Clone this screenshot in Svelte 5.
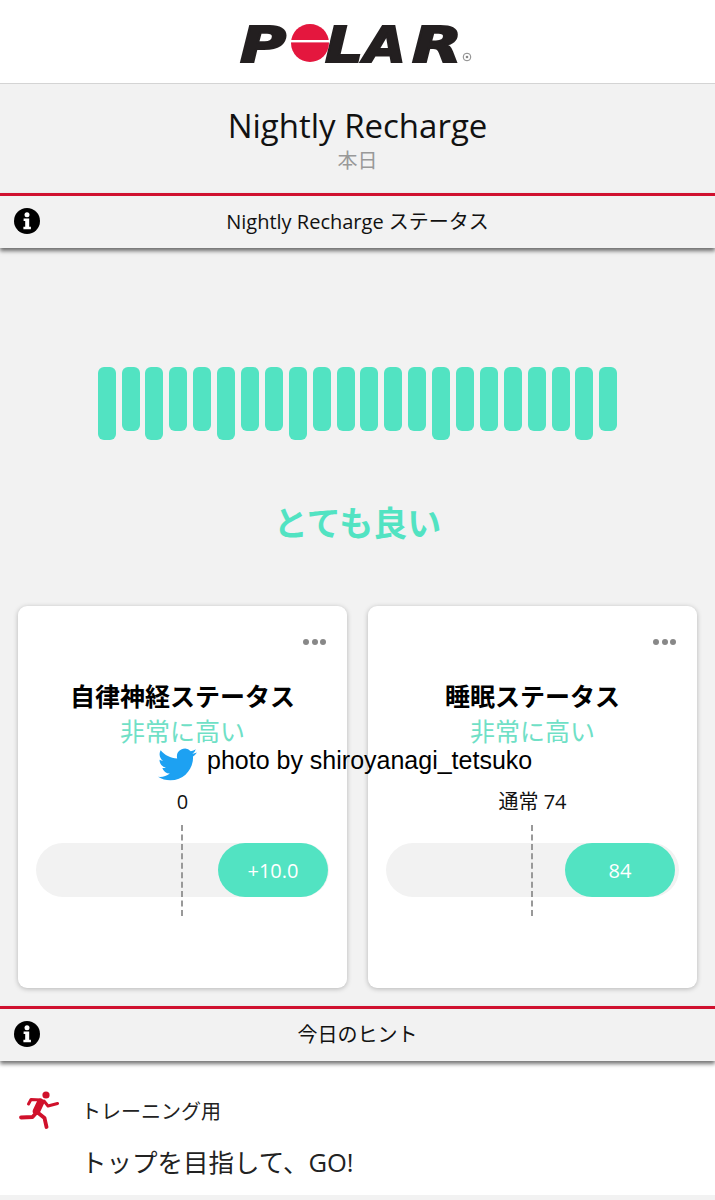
<script>
	// long bars sit at these positions in the 22-bar recharge meter
	const longBars = [0, 2, 5, 8, 14, 20];
	const bars = Array.from({ length: 22 }, (_, i) => longBars.includes(i));

	const cards = [
		{ title: '自律神経ステータス', level: '非常に高い', label: '0', value: '+10.0', inset: false },
		{ title: '睡眠ステータス', level: '非常に高い', label: '通常 74', value: '84', inset: true }
	];
</script>

{#snippet infoIcon()}
	<svg class="info" viewBox="0 0 26 26" aria-hidden="true">
		<circle cx="13" cy="13" r="13" fill="#000" />
		<circle cx="13" cy="6.8" r="2.5" fill="#fff" />
		<path d="M9.6 10.6h5.6v8.2h1.7v2.4H9.4v-2.4h1.8v-5.8H9.6z" fill="#fff" />
	</svg>
{/snippet}

<div class="page">
	<header class="brand">
		<svg class="logo" viewBox="0 0 235 42" role="img" aria-label="POLAR">
			<g class="logo-letters">
				<text transform="translate(0 40) scale(1.26 1)">P</text>
				<text transform="translate(85 40) scale(1.2 1)">L</text>
				<text transform="translate(124 40) scale(1.08 1)">A</text>
				<text transform="translate(172 40) scale(1.3 1)">R</text>
			</g>
			<circle cx="70" cy="21" r="19" fill="#e4173e" />
			<rect x="50" y="18" width="40" height="2.4" fill="#fff" />
			<circle cx="227" cy="35" r="3.8" fill="none" stroke="#888" stroke-width="1" />
			<circle cx="227" cy="35" r="1.3" fill="#888" />
		</svg>
	</header>

	<section class="heading">
		<h1>Nightly Recharge</h1>
		<p>本日</p>
	</section>

	<div class="section-bar">
		{@render infoIcon()}
		<span>Nightly Recharge ステータス</span>
	</div>

	<main class="content">
		<div class="meter">
			{#each bars as long}
				<div class="bar" class:long></div>
			{/each}
		</div>

		<div class="verdict">とても良い</div>

		<div class="cards">
			{#each cards as card}
				<article class="card">
					<div class="dots"><i></i><i></i><i></i></div>
					<h2>{card.title}</h2>
					<div class="level">{card.level}</div>
					<div class="label">{card.label}</div>
					<div class="track" class:inset={card.inset}>
						<div class="tick"></div>
						<div class="pill">{card.value}</div>
					</div>
				</article>
			{/each}
		</div>

		<div class="watermark">
			<svg viewBox="0 0 24 24" aria-hidden="true">
				<path
					fill="#1da1f2"
					d="M23.95 4.57a10 10 0 0 1-2.82.77 4.96 4.96 0 0 0 2.16-2.72c-.95.55-2 .96-3.12 1.19a4.92 4.92 0 0 0-8.38 4.48C7.69 8.1 4.07 6.13 1.64 3.16a4.82 4.82 0 0 0-.67 2.48c0 1.71.87 3.21 2.19 4.1a4.9 4.9 0 0 1-2.23-.62v.06a4.92 4.92 0 0 0 3.95 4.83 5 5 0 0 1-2.21.08 4.94 4.94 0 0 0 4.6 3.42A9.87 9.87 0 0 1 0 19.54a14 14 0 0 0 7.56 2.21c9.05 0 14-7.5 14-13.98 0-.21 0-.42-.02-.63a9.94 9.94 0 0 0 2.41-2.57z"
				/>
			</svg>
			<span>photo by shiroyanagi_tetsuko</span>
		</div>
	</main>

	<div class="section-bar">
		{@render infoIcon()}
		<span>今日のヒント</span>
	</div>

	<section class="tip">
		<div class="tip-head">
			<svg class="runner" viewBox="0 0 40 38" aria-hidden="true">
				<circle cx="27" cy="4" r="3.6" fill="#d0112b" />
				<g fill="none" stroke="#d0112b" stroke-linecap="round" stroke-linejoin="round">
					<path stroke-width="7.5" d="M21.5 11.5 17.5 20" />
					<path stroke-width="3" d="M22 9 12 8.5 9.5 13" />
					<path stroke-width="3" d="M25 10 29 15 38.5 12.5" />
					<path stroke-width="3.8" d="M18 21 13.5 26 2 26.5" />
					<path stroke-width="3.8" d="M18 21 25.5 27 27.5 36" />
				</g>
			</svg>
			<span>トレーニング用</span>
		</div>
		<p>トップを目指して、GO!</p>
	</section>
</div>

<style>
	:global(body) {
		margin: 0;
		background: #f2f2f2;
	}

	.page {
		width: 715px;
		height: 1200px;
		overflow: hidden;
		background: #f2f2f2;
		color: #111;
		font-family: 'Open Sans', 'Noto Sans CJK JP', sans-serif;
	}

	.brand {
		height: 83px;
		background: #fff;
		border-bottom: 1px solid #d4d4d4;
		display: flex;
		justify-content: center;
		align-items: center;
	}

	.logo {
		width: 235px;
		height: 42px;
		margin-top: 2px;
		overflow: visible;
	}

	.logo-letters text {
		font-family: 'DejaVu Sans', sans-serif;
		font-weight: 700;
		font-style: oblique;
		font-size: 50px;
		fill: #231f20;
		stroke: #231f20;
		stroke-width: 2;
	}

	.heading {
		height: 109px;
		text-align: center;
		box-sizing: border-box;
		padding-top: 20px;
	}

	h1 {
		margin: 0;
		font-size: 33px;
		line-height: 44px;
		font-weight: 400;
	}

	.heading p {
		margin: 0;
		font-size: 20px;
		line-height: 26px;
		color: #999;
	}

	.section-bar {
		position: relative;
		z-index: 1;
		height: 52px;
		border-top: 3px solid #d0112f;
		background: #f2f2f2;
		box-shadow: 0 3px 4px rgba(0, 0, 0, 0.55);
		display: flex;
		align-items: center;
		justify-content: center;
		font-size: 20px;
	}

	.section-bar span {
		margin-top: -3px;
	}

	.info {
		position: absolute;
		left: 14px;
		top: 12px;
		width: 26px;
		height: 26px;
	}

	.content {
		position: relative;
		height: 758px;
		box-sizing: border-box;
		padding-top: 119px;
	}

	.meter {
		display: flex;
		justify-content: center;
		align-items: flex-start;
		gap: 5.9px;
		height: 73px;
	}

	.bar {
		width: 18px;
		height: 64px;
		border-radius: 6px;
		background: #52e3c2;
	}

	.bar.long {
		height: 73px;
	}

	.verdict {
		margin-top: 60px;
		text-align: center;
		font-size: 34px;
		line-height: 46px;
		font-weight: 700;
		color: #52e3c2;
	}

	.cards {
		display: flex;
		gap: 21px;
		padding: 0 18px;
		margin-top: 60px;
	}

	.card {
		flex: 1;
		height: 382px;
		box-sizing: border-box;
		background: #fff;
		border-radius: 9px;
		box-shadow: 0 1px 5px rgba(0, 0, 0, 0.25);
		padding: 33px 18px 0;
		text-align: center;
	}

	.dots {
		display: flex;
		justify-content: flex-end;
		gap: 2.5px;
		height: 6px;
		padding-right: 3px;
	}

	.dots i {
		width: 6px;
		height: 6px;
		border-radius: 50%;
		background: #888;
	}

	h2 {
		margin: 31px 0 0;
		font-size: 25px;
		line-height: 40px;
		font-weight: 700;
		color: #000;
	}

	.level {
		font-size: 25px;
		line-height: 30px;
		color: #6fe0c6;
	}

	.label {
		margin-top: 43px;
		font-size: 20px;
		line-height: 26px;
	}

	.track {
		position: relative;
		margin-top: 28px;
		height: 54px;
		border-radius: 27px;
		background: #f2f2f2;
		display: flex;
		justify-content: flex-end;
		padding-right: 1px;
	}

	.track.inset {
		padding-right: 4px;
	}

	.tick {
		position: absolute;
		left: 50%;
		top: -18px;
		height: 91px;
		margin-left: -2px;
		border-left: 2px dashed #999;
	}

	.pill {
		position: relative;
		width: 110px;
		height: 54px;
		border-radius: 27px;
		background: #52e3c2;
		color: #fff;
		font-size: 20px;
		line-height: 56px;
	}

	.watermark {
		position: absolute;
		left: 158px;
		top: 497px;
		display: flex;
		align-items: center;
		gap: 10px;
		font-family: 'Liberation Sans', sans-serif;
		font-size: 25px;
		color: #000;
	}

	.watermark span {
		margin-bottom: 8px;
	}

	.watermark svg {
		width: 39px;
		height: 39px;
	}

	.tip {
		height: 134px;
		background: #fff;
		box-sizing: border-box;
		padding: 30px 0 0 19px;
	}

	.tip-head {
		display: flex;
		align-items: center;
		gap: 22px;
		font-size: 20px;
		color: #222;
	}

	.runner {
		width: 40px;
		height: 38px;
	}

	.tip p {
		margin: 15px 0 0 62px;
		font-size: 25.5px;
		line-height: 36px;
		color: #222;
	}
</style>
